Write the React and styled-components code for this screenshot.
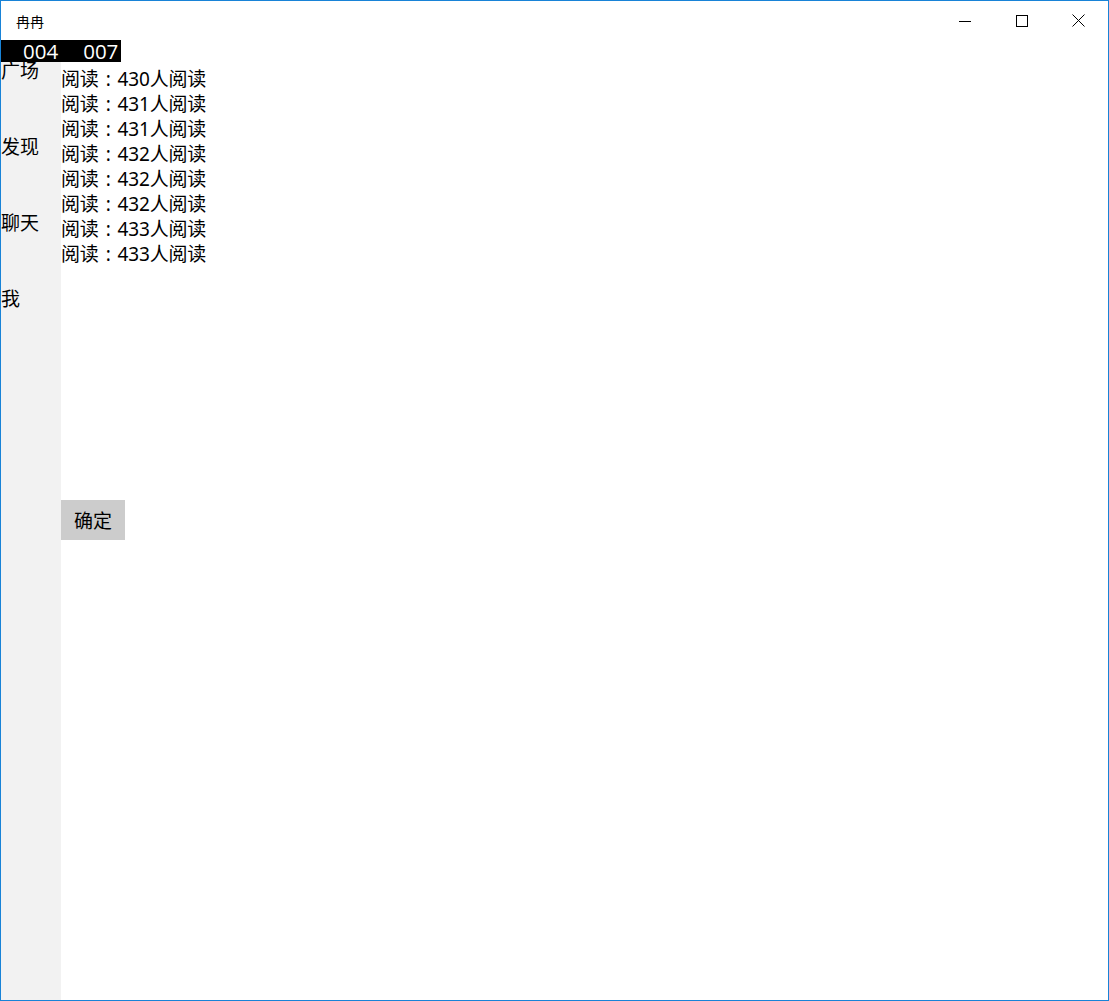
import styled, { createGlobalStyle } from 'styled-components'

const GlobalStyle = createGlobalStyle`
	html, body {
		margin: 0;
		padding: 0;
		background: #ffffff;
	}
	* {
		box-sizing: border-box;
	}
`

const FONT = `"Noto Sans", "Noto Sans CJK SC", sans-serif`

const menu = ['广场', '发现', '聊天', '我']
const reads = [430, 431, 431, 432, 432, 432, 433, 433]

const App = () => {
	return (
		<>
			<GlobalStyle />
			<S.Window>
				<S.TitleBar>
					<S.Title>冉冉</S.Title>
					<S.Controls>
						<S.ControlButton>
							<svg width="12" height="12" viewBox="0 0 12 12">
								<path d="M0 6.5H12" stroke="#000" strokeWidth="1" />
							</svg>
						</S.ControlButton>
						<S.ControlButton>
							<svg width="12" height="12" viewBox="0 0 12 12">
								<rect x="0.5" y="0.5" width="11" height="11" fill="none" stroke="#000" strokeWidth="1" />
							</svg>
						</S.ControlButton>
						<S.ControlButton>
							<svg width="13" height="13" viewBox="0 0 13 13">
								<path d="M0.5 0.5L12.5 12.5M12.5 0.5L0.5 12.5" stroke="#000" strokeWidth="1" />
							</svg>
						</S.ControlButton>
					</S.Controls>
				</S.TitleBar>
				<S.Body>
					<S.Sidebar>
						{menu.map(item => (
							<S.MenuItem key={item}>{item}</S.MenuItem>
						))}
					</S.Sidebar>
					<S.Content>
						<S.ReadList>
							{reads.map((n, i) => (
								<S.ReadRow key={i}>
									阅读<S.Colon>:</S.Colon>{n}人阅读
								</S.ReadRow>
							))}
						</S.ReadList>
						<S.ConfirmButton>确定</S.ConfirmButton>
					</S.Content>
				</S.Body>
				<S.Counter>
					<span>004</span>
					<span>007</span>
				</S.Counter>
			</S.Window>
		</>
	)
}

export default App

const Window = styled.div`
	position: relative;
	width: 1109px;
	height: 1001px;
	border: 1px solid #1883d7;
	display: flex;
	flex-direction: column;
	background: #ffffff;
	font-family: ${FONT};
	color: #000;
	overflow: hidden;
`

const TitleBar = styled.div`
	height: 39px;
	display: flex;
	align-items: center;
	justify-content: space-between;
	flex-shrink: 0;
`

const Title = styled.div`
	padding-left: 15px;
	font-size: 14px;
	padding-top: 1px;
`

const Controls = styled.div`
	display: flex;
	height: 100%;
	margin-right: 1px;
`

const ControlButton = styled.div`
	width: 57px;
	height: 100%;
	display: flex;
	align-items: center;
	justify-content: center;
`

const Body = styled.div`
	flex: 1;
	display: flex;
`

const Sidebar = styled.div`
	width: 60px;
	background: #f2f2f2;
	display: flex;
	flex-direction: column;
	padding-top: 19px;
`

const MenuItem = styled.div`
	height: 76px;
	font-size: 19px;
	line-height: 25px;
	white-space: nowrap;
`

const Content = styled.div`
	flex: 1;
	display: flex;
	flex-direction: column;
	align-items: flex-start;
`

const ReadList = styled.div`
	height: 460px;
	padding-top: 27px;
`

const ReadRow = styled.div`
	font-size: 19px;
	line-height: 25px;
	white-space: nowrap;
	letter-spacing: -0.2px;
`

const Colon = styled.span`
	display: inline-block;
	width: 19px;
	text-align: center;
`

const ConfirmButton = styled.div`
	width: 64px;
	height: 40px;
	background: #cccccc;
	font-size: 19px;
	display: flex;
	align-items: center;
	justify-content: center;
`

const Counter = styled.div`
	position: absolute;
	top: 39px;
	left: 0;
	width: 120px;
	height: 22px;
	background: #000;
	color: #fff;
	font-family: "Open Sans", sans-serif;
	font-size: 20.5px;
	line-height: 22px;
	display: flex;
	gap: 25px;
	padding-left: 22px;
`

const S = {
	Window,
	TitleBar,
	Title,
	Controls,
	ControlButton,
	Body,
	Sidebar,
	MenuItem,
	Content,
	ReadList,
	ReadRow,
	Colon,
	ConfirmButton,
	Counter,
}
